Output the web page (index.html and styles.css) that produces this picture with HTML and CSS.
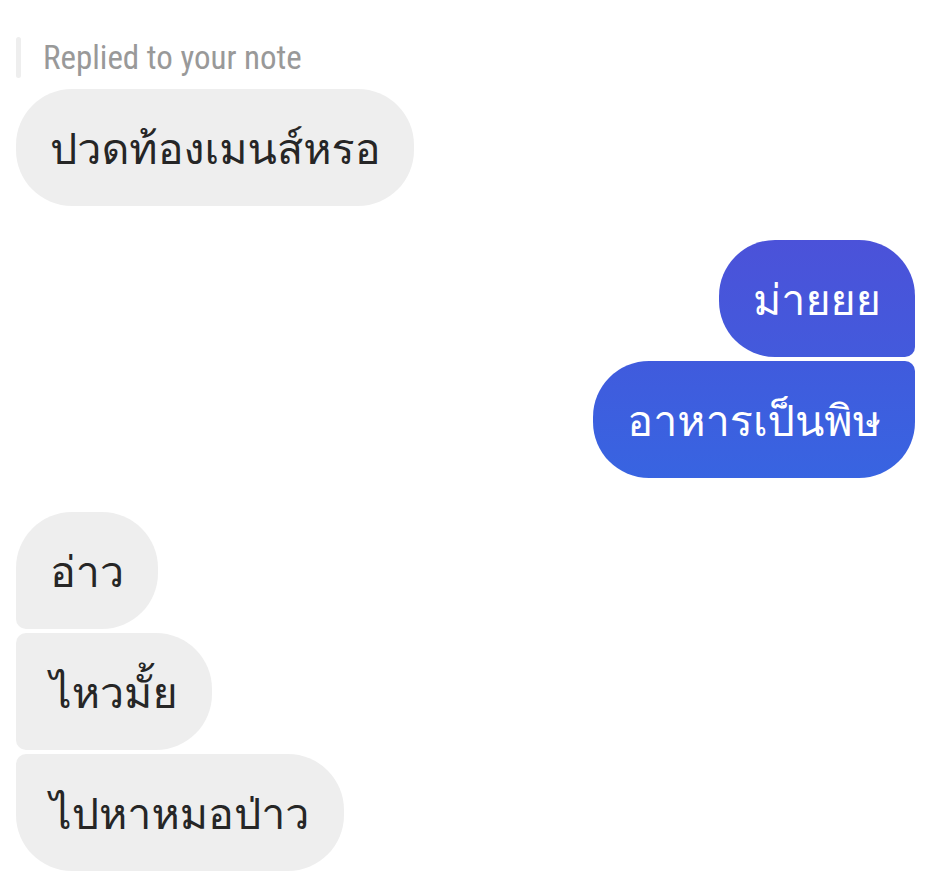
FILE: index.html
```html
<!DOCTYPE html>
<html lang="th">
<head>
    <meta charset="UTF-8">
    <meta name="viewport" content="width=device-width, initial-scale=1.0">
    <title>Chat</title>
    <link rel="stylesheet" href="styles.css">
</head>
<body>
    <main class="chat">
        <div class="group">
            <p class="reply" lang="en">Replied to your note</p>
            <div class="message">ปวดท้องเมนส์หรอ</div>
        </div>
        <div class="group mine">
            <div class="message first">ม่ายยย</div>
            <div class="message last">อาหารเป็นพิษ</div>
        </div>
        <div class="group">
            <div class="message first">อ่าว</div>
            <div class="message middle">ไหวมั้ย</div>
            <div class="message last">ไปหาหมอป่าว</div>
        </div>
    </main>
</body>
</html>
```

FILE: styles.css
```css
* {
    box-sizing: border-box;
}
body {
    margin: 0;
    background-color: #fff;
    color: #262626;
    font-family: Loma, "Noto Sans Thai Looped", "Noto Sans", sans-serif;
}
.chat {
    display: flex;
    flex-direction: column;
    gap: 34px;
    padding: 37px 16px 15px;
}
.group {
    display: flex;
    flex-direction: column;
    align-items: flex-start;
    gap: 4px;
}
.mine {
    align-items: flex-end;
    color: #fff;
}
.reply {
    position: relative;
    margin: 0 0 7px;
    padding-left: 27px;
    color: #999;
    font-family: "Roboto Condensed", Roboto, sans-serif;
    font-size: 33px;
    line-height: 41px;
}
.reply::before {
    content: "";
    position: absolute;
    top: 0;
    bottom: 0;
    left: 0;
    width: 5px;
    border-radius: 3px;
    background-color: #eee;
}
.message {
    padding: 30px 34px 26px;
    border-radius: 56px;
    background-color: #eee;
    font-size: 43px;
    line-height: 61px;
    white-space: nowrap;
}
.first {
    border-bottom-left-radius: 10px;
}
.middle {
    border-top-left-radius: 10px;
    border-bottom-left-radius: 10px;
}
.last {
    border-top-left-radius: 10px;
}
.mine .message {
    border-radius: 56px;
}
.mine .first {
    border-bottom-right-radius: 10px;
    background: linear-gradient(#4b52d9, #435adc);
}
.mine .last {
    border-top-right-radius: 10px;
    background: linear-gradient(#405bdd, #3864e1);
}
```
